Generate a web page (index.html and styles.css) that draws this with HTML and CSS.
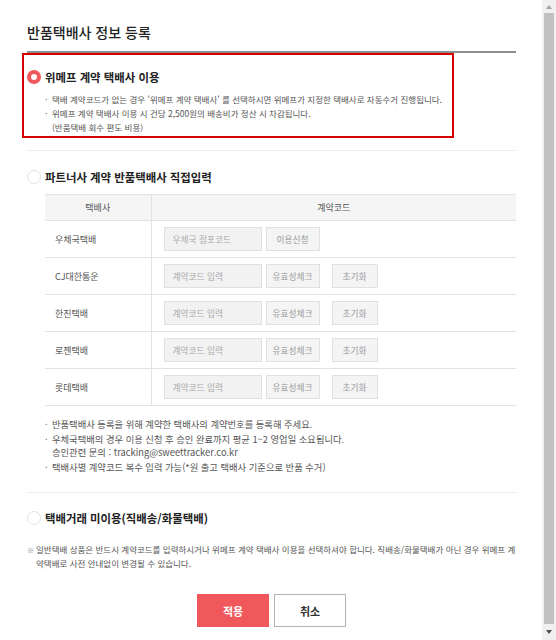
FILE: index.html
```html
<!DOCTYPE html>
<html lang="ko">
<head>
  <meta charset="UTF-8" />
  <title>반품택배사 정보 등록</title>
  <link rel="stylesheet" href="styles.css">
</head>
<body>
<div class="window">
  <div class="content">
    <h1 class="page-title">반품택배사 정보 등록</h1>

    <div class="option-box is-selected">
      <div class="option-row">
        <span class="radio radio-on"></span>
        <span class="option-label">위메프 계약 택배사 이용</span>
      </div>
      <ul class="bullet-list small">
        <li><span class="dot">·</span>택배 계약코드가 없는 경우 '위메프 계약 택배사' 를 선택하시면 위메프가 지정한 택배사로 자동수거 진행됩니다.</li>
        <li><span class="dot">·</span>위메프 계약 택배사 이용 시 건당 2,500원의 배송비가 정산 시 차감됩니다.<br>(반품택배 회수 편도 비용)</li>
      </ul>
    </div>

    <div class="section">
      <div class="option-row">
        <span class="radio"></span>
        <span class="option-label">파트너사 계약 반품택배사 직접입력</span>
      </div>

      <table class="courier-table">
        <thead>
          <tr>
            <th class="col-name">택배사</th>
            <th>계약코드</th>
          </tr>
        </thead>
        <tbody>
          <tr>
            <td class="col-name">우체국택배</td>
            <td>
              <div class="code-field">
                <input class="code-input" type="text" placeholder="우체국 점포코드">
                <button class="gray-btn">이용신청</button>
              </div>
            </td>
          </tr>
          <tr>
            <td class="col-name">CJ대한통운</td>
            <td>
              <div class="code-field">
                <input class="code-input" type="text" placeholder="계약코드 입력">
                <button class="gray-btn">유효성체크</button>
                <button class="gray-btn reset">초기화</button>
              </div>
            </td>
          </tr>
          <tr>
            <td class="col-name">한진택배</td>
            <td>
              <div class="code-field">
                <input class="code-input" type="text" placeholder="계약코드 입력">
                <button class="gray-btn">유효성체크</button>
                <button class="gray-btn reset">초기화</button>
              </div>
            </td>
          </tr>
          <tr>
            <td class="col-name">로젠택배</td>
            <td>
              <div class="code-field">
                <input class="code-input" type="text" placeholder="계약코드 입력">
                <button class="gray-btn">유효성체크</button>
                <button class="gray-btn reset">초기화</button>
              </div>
            </td>
          </tr>
          <tr>
            <td class="col-name">롯데택배</td>
            <td>
              <div class="code-field">
                <input class="code-input" type="text" placeholder="계약코드 입력">
                <button class="gray-btn">유효성체크</button>
                <button class="gray-btn reset">초기화</button>
              </div>
            </td>
          </tr>
        </tbody>
      </table>

      <ul class="bullet-list notes">
        <li><span class="dot">·</span>반품택배사 등록을 위해 계약한 택배사의 계약번호를 등록해 주세요.</li>
        <li><span class="dot">·</span>우체국택배의 경우 이용 신청 후 승인 완료까지 평균 1~2 영업일 소요됩니다.<br>승인관련 문의 : tracking@sweettracker.co.kr</li>
        <li><span class="dot">·</span>택배사별 계약코드 복수 입력 가능(*원 출고 택배사 기준으로 반품 수거)</li>
      </ul>
    </div>

    <div class="section last">
      <div class="option-row">
        <span class="radio"></span>
        <span class="option-label">택배거래 미이용(직배송/화물택배)</span>
      </div>
      <p class="warning"><span class="mark">※</span>일반택배 상품은 반드시 계약코드를 입력하시거나 위메프 계약 택배사 이용을 선택하셔야 합니다. 직배송/화물택배가 아닌 경우 위메프 계약택배로 사전 안내없이 변경될 수 있습니다.</p>
    </div>

    <div class="actions">
      <button class="btn btn-apply">적용</button>
      <button class="btn btn-cancel">취소</button>
    </div>
  </div>

  <div class="scrollbar">
    <span class="arrow arrow-up"></span>
    <div class="thumb"></div>
    <span class="arrow arrow-down"></span>
  </div>
</div>
</body>
</html>
```

FILE: styles.css
```css
body {
  margin: 0;
  font-family: 'Noto Sans CJK KR', 'Noto Sans', sans-serif;
  color: #222;
  background: #fff;
}

.window {
  display: flex;
  height: 640px;
  overflow: hidden;
}

.content {
  flex: 1;
  padding: 22px 26px 0 27px;
}

.page-title {
  margin: 0;
  font-size: 14px;
  font-weight: 500;
  line-height: 20px;
  padding-bottom: 9px;
  border-bottom: 2px solid #8e8e8e;
}

/* option rows */
.option-box {
  margin-left: -5px;
  width: 432px;
  box-sizing: border-box;
  border: 2px solid #d40000;
  padding: 12px 0 2px 3px;
}

.option-row {
  display: flex;
  align-items: center;
  gap: 4px;
  height: 20px;
}

.option-label {
  font-size: 11.4px;
  font-weight: 700;
  color: #222;
}

.radio {
  width: 14px;
  height: 14px;
  box-sizing: border-box;
  border-radius: 50%;
  border: 1px solid #e2e2e2;
  background: #fff;
}

.radio-on {
  border: 4px solid #f0585c;
}

.section {
  margin-top: 12px;
  border-top: 1px solid #ececec;
  padding-top: 16px;
}

.section.last {
  margin-top: 18px;
  padding-top: 15px;
}

/* bullet lists */
.bullet-list {
  list-style: none;
  margin: 0;
  padding: 0 0 0 25px;
  color: #555;
}

.bullet-list li {
  padding-left: 7px;
  text-indent: -7px;
}

.bullet-list .dot {
  display: inline-block;
  width: 7px;
  text-indent: 0;
}

.bullet-list.small {
  margin-top: 5px;
  padding-left: 18px;
  font-size: 8.5px;
  line-height: 14px;
}

.bullet-list.notes {
  margin-top: 12px;
  padding-left: 18px;
  font-size: 9.3px;
  line-height: 13px;
}

.bullet-list.notes li {
  margin-bottom: 2px;
}

/* table */
.courier-table {
  margin: 7px 0 0 18px;
  width: 471px;
  border-collapse: collapse;
  font-size: 9px;
  color: #555;
}

.courier-table th {
  height: 25px;
  padding: 0;
  font-weight: 400;
  background: #f5f5f5;
  border-top: 1px solid #e2e2e2;
  border-bottom: 1px solid #e2e2e2;
}

.courier-table td {
  padding: 6px 0 6px 12px;
  border-bottom: 1px solid #e2e2e2;
}

.courier-table .col-name {
  width: 106px;
  border-right: 1px solid #e2e2e2;
  box-sizing: border-box;
}

.courier-table td.col-name {
  padding-left: 10px;
}

.code-field {
  display: flex;
  gap: 4px;
}

.code-input {
  width: 98px;
  height: 24px;
  box-sizing: border-box;
  border: 1px solid #e0e0e0;
  background: #f2f2f2;
  padding: 0 8px;
  font-family: inherit;
  font-size: 8.7px;
  color: #999;
}

.code-input::placeholder {
  color: #aaa;
}

.gray-btn {
  height: 24px;
  width: 54px;
  box-sizing: border-box;
  border: 1px solid #e0e0e0;
  background: #f4f4f4;
  font-family: inherit;
  font-size: 8.7px;
  color: #999;
  padding: 0;
}

.gray-btn.reset {
  width: 46px;
  margin-left: 8px;
}

/* warning */
.warning {
  margin: 15px 0 0;
  padding-left: 9px;
  text-indent: -9px;
  font-size: 8.5px;
  line-height: 12.5px;
  color: #555;
}

.warning .mark {
  display: inline-block;
  width: 9px;
  text-indent: 0;
  font-size: 7px;
  color: #888;
}

/* buttons */
.actions {
  display: flex;
  justify-content: center;
  gap: 5px;
  margin-top: 25px;
}

.btn {
  width: 72px;
  height: 33px;
  box-sizing: border-box;
  font-family: inherit;
  font-size: 11px;
  font-weight: 700;
  cursor: pointer;
}

.btn-apply {
  background: #f0585c;
  border: 1px solid #f0585c;
  color: #fff;
}

.btn-cancel {
  background: #fff;
  border: 1px solid #b5b5b5;
  color: #333;
}

/* fake window scrollbar */
.scrollbar {
  width: 14px;
  background: #f0f0f0;
  display: flex;
  flex-direction: column;
  align-items: center;
}

.thumb {
  width: 10px;
  flex: 1;
  margin: 4px 0 6px;
  background: #c1c1c1;
}

.arrow {
  width: 0;
  height: 0;
  border-left: 3px solid transparent;
  border-right: 3px solid transparent;
}

.arrow-up {
  margin-top: 5px;
  border-bottom: 4px solid #a3a3a3;
}

.arrow-down {
  margin-bottom: 6px;
  border-top: 4px solid #505050;
}
```
